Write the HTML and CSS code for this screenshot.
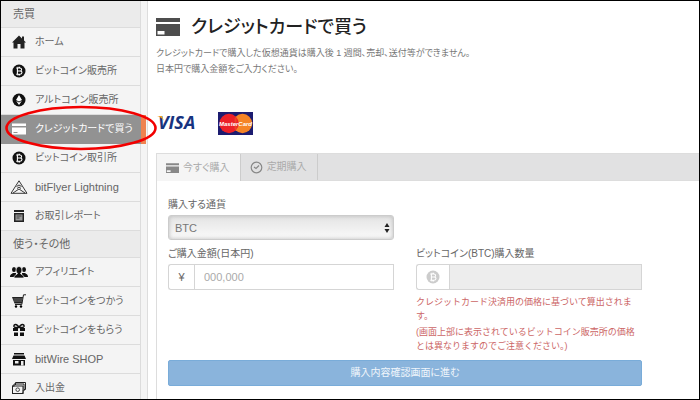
FILE: index.html
```html
<!DOCTYPE html>
<html lang="ja">
<head>
<meta charset="utf-8">
<title>クレジットカードで買う</title>
<link rel="stylesheet" href="styles.css">
</head>
<body>
<svg class="defs" aria-hidden="true">
  <symbol id="coin" viewBox="0 0 14 14"><circle cx="7" cy="7" r="6.5" fill="currentColor"/><path d="M4.2 4h3.6c2.3 0 2.3 2.7.5 3 2.4.2 2.1 3.3-.5 3.3H4.2M5.4 4v6.3M5.4 7h3M6 2.8V4M7.6 2.8V4M6 10.2v1.2M7.6 10.2v1.2" fill="none" stroke="#fff" stroke-width="1.1"/></symbol>
  <symbol id="card" viewBox="0 0 24 18"><path fill="currentColor" fill-rule="evenodd" d="M0 0h24v4H0zM0 6h24v12H0zM1.500 13v3.500h7V13z"/></symbol>
</svg>
<div class="app">
  <nav class="sidebar">
    <h2 class="section">売買</h2>
    <a class="item" href="#"><svg class="icon" viewBox="0 0 14 14"><path d="M7 .5 10 3.500V1.500h2v4l2 2H12.500V13.500H8.500V9h-3v4.500h-4v-6H0z" fill="#222"/></svg>ホーム</a>
    <a class="item" href="#"><svg class="icon"><use href="#coin"/></svg>ビットコイン販売所</a>
    <a class="item" href="#"><svg class="icon" viewBox="0 0 14 14"><circle cx="7" cy="7" r="6.500" fill="#111"/><path d="M7 2 10 7 7 8.500 4 7zM4.200 8 7 9.400 9.800 8 7 12z" fill="#fff"/></svg>アルトコイン販売所</a>
    <a class="item active" href="#"><svg class="icon" viewBox="0 0 14 14"><path fill="#fff" fill-rule="evenodd" d="M0 1.500h14V4H0zM0 5.500h14v7H0zM1.500 10v1h4v-1z"/></svg>クレジットカードで買う
      <svg class="ring" viewBox="0 0 152 46" aria-hidden="true"><ellipse cx="76" cy="23" rx="74.500" ry="21" fill="none" stroke="#f20000" stroke-width="2.600"/></svg></a>
    <a class="item" href="#"><svg class="icon"><use href="#coin"/></svg>ビットコイン取引所</a>
    <a class="item latin" href="#"><svg class="icon wide" viewBox="0 0 18 14"><path d="M9 .8 17 13.300H1zM6.500 6.500 9 5l2.500 1.500M9 9l-6 4M9 9l6 4M7 8.500 9 7l2 1.500" fill="none" stroke="#222" stroke-width=".9"/></svg>bitFlyer Lightning</a>
    <a class="item" href="#"><svg class="icon" viewBox="0 0 14 14"><path d="M2 1h10v2H2zM2 4h10v9H2z" fill="#222"/><path d="M3.500 5.500h7v6h-7z" fill="#999"/><path d="M4.500 7h5M4.500 9h3" stroke="#444"/></svg>お取引レポート</a>
    <h2 class="section">使う・その他</h2>
    <a class="item" href="#"><svg class="icon wide" viewBox="0 0 18 14"><g fill="#111"><ellipse cx="4" cy="4.500" rx="2" ry="2.500"/><ellipse cx="14" cy="4.500" rx="2" ry="2.500"/><path d="M0 12c0-3 2-3 3-4h3v4zM18 12c0-3-2-3-3-4h-3v4z"/><path d="M4 13c0-3.500 3-3 3.500-4.500C5 6 6 1.500 9 1.500S13 6 10.500 8.500C11 10 14 9.500 14 13z" stroke="#f4f4f4" stroke-width=".7"/></g></svg>アフィリエイト</a>
    <a class="item" href="#"><svg class="icon" viewBox="0 0 14 14"><path d="M0 3h11l-1 6.500H2.500z" fill="#222"/><path d="M14 .8h-2.500L9.800 10.500H3M2 5h8M2.500 7h7" fill="none" stroke="#222"/><path d="M1.500 5h9M2 7h8" stroke="#bbb" stroke-width=".5"/><circle cx="4" cy="12.500" r="1.200"/><circle cx="9" cy="12.500" r="1.200"/></svg>ビットコインをつかう</a>
    <a class="item" href="#"><svg class="icon" viewBox="0 0 14 14"><path d="M1 5h5v3H1zM8 5h5v3H8zM2 9.500h4V13H2zM8 9.500h4V13H8z" fill="#111"/><path d="M7 4.500C5 0 1.500 1 2 3.500c.5 1.500 3 1 5 1 2 0 4.500.5 5-1C12.500 1 9 0 7 4.500" fill="none" stroke="#111" stroke-width="1.500"/></svg>ビットコインをもらう</a>
    <a class="item latin" href="#"><svg class="icon" viewBox="0 0 14 14"><path d="M2 1h10v1.500H2zM1.500 3.500h11L14 7H0zM1 8h12v5.500H1z" fill="#111"/><path d="M3 9h3.500v2.500H3zM9 9h2.500v4.500H9z" fill="#eee"/></svg>bitWire SHOP</a>
    <a class="item" href="#"><svg class="icon" viewBox="0 0 14 14"><path d="M3.500 4V1.500h10v7H12M2 5.500V3h10v7h-1.500M.5 5h10.500v7.500H.5z" fill="none" stroke="#222"/><circle cx="5.700" cy="8.700" r="1.800" fill="none" stroke="#222" stroke-width=".8"/><path d="M0 4.500h2.500L0 7zM11.500 13H9l2.500-2.500zM0 13v-2l2 2z" fill="#222"/></svg>入出金</a>
  </nav>
  <main class="main">
    <h1 class="title"><svg class="title-icon"><use href="#card"/></svg>クレジットカードで買う</h1>
    <p class="lead">クレジットカードで購入した仮想通貨は購入後 1 週間、売却、送付等ができません。<br>日本円で購入金額をご入力ください。</p>
    <div class="brands">
      <svg class="visa" viewBox="0 0 43 28" role="img" aria-label="VISA"><text x="2" y="20" font-size="18" class="visa-text">VISA</text><path d="M1 7h5l2 5C6.500 9.500 4.500 8 1 7z" fill="#f0a020"/></svg>
      <svg class="mastercard" viewBox="0 0 35 23" role="img" aria-label="MasterCard"><path d="M0 0h35v23H0z" fill="#1c1c70"/><circle cx="24.500" cy="11.500" r="9.700" fill="#f58426"/><circle cx="11" cy="11.500" r="9.700" fill="#ec2028"/><path d="M17.700 4.500v14M16 7h3M16 9h3M16 14h3M16 16h3" stroke="#f0562a" stroke-width=".6"/><text x="17.500" y="14" text-anchor="middle" font-size="6" class="mc-text">MasterCard</text></svg>
    </div>
    <section class="panel">
      <div class="tabs">
        <button class="tab current" type="button"><svg class="tab-icon"><use href="#card"/></svg>今すぐ購入</button>
        <button class="tab" type="button"><svg class="tab-icon" viewBox="0 0 13 13"><circle cx="6.500" cy="6.500" r="5.300" fill="none" stroke="#888" stroke-width="1.200"/><path d="M4 6l2 1.500L9 4.500" fill="none" stroke="#888" stroke-width="1.200"/></svg>定期購入</button>
      </div>
      <form class="form">
        <div class="field currency">
          <label for="currency">購入する通貨</label>
          <div class="select-wrap">
            <select id="currency"><option>BTC</option></select>
            <svg class="arrows" viewBox="0 0 6 10" aria-hidden="true"><path d="M3 0 5.500 4H.5zM3 10 .5 6h5z" fill="#222"/></svg>
          </div>
        </div>
        <div class="field">
          <label for="amount">ご購入金額(日本円)</label>
          <div class="group"><span class="addon">¥</span><input id="amount" type="text" placeholder="000,000"></div>
        </div>
        <div class="field">
          <label for="quantity">ビットコイン(BTC)購入数量</label>
          <div class="group"><span class="addon coin"><svg class="icon"><use href="#coin"/></svg></span><input id="quantity" type="text" disabled></div>
          <div class="note"><p>クレジットカード決済用の価格に基づいて算出されま<br>す。</p><p>(画面上部に表示されているビットコイン販売所の価格<br>とは異なりますのでご注意ください。)</p></div>
        </div>
        <button class="submit" type="button">購入内容確認画面に進む</button>
      </form>
    </section>
  </main>
</div>
</body>
</html>
```
FILE: styles.css
```css
* { box-sizing: border-box; }
body {
  margin: 0;
  color: #666;
  background: #fff;
  font: 10px/16px "Liberation Sans", "Noto Sans CJK JP", sans-serif;
  font-feature-settings: "palt";
}
h1, h2, p { margin: 0; font-weight: 400; }
button, input, select { font: inherit; font-feature-settings: inherit; color: inherit; }
svg { flex: none; }
.defs { position: absolute; width: 0; height: 0; }
.app {
  display: flex;
  height: 100vh;
  overflow: hidden;
  border: 1px solid #000;
}
.sidebar {
  flex: none;
  width: 147px;
  padding-right: 6px;
  background: #f4f4f4;
  border-right: 1px solid #ddd;
}
.section, .item {
  display: flex;
  align-items: center;
  border: solid #dcdcdc;
  border-width: 0 1px 1px 0;
}
.section {
  height: 27px;
  padding-left: 12px;
  background: #ebebeb;
  font-size: 11px;
}
.item {
  position: relative;
  height: 29px;
  padding-left: 11px;
  gap: 9px;
  color: #666;
  text-decoration: none;
  white-space: nowrap;
}
.latin { font-size: 11px; }
.icon { width: 14px; height: 14px; color: #111; }
.wide { width: 18px; margin: 0 -2px; }
.active {
  color: #fff;
  background: #929292;
  border-color: #929292;
  box-shadow: 5px 0 #ef8250;
}
.ring { position: absolute; left: 4px; top: -10px; width: 152px; height: 46px; z-index: 1; }
.main { flex: 1; min-width: 0; padding: 10px 0 0 8px; }
.title {
  display: flex;
  align-items: center;
  gap: 11px;
  height: 32px;
  color: #222;
  font-size: 18px;
  font-weight: 500;
}
.title-icon { width: 24px; height: 18px; color: #4d4d4d; }
.lead { margin-top: 2px; font-size: 9px; color: #777; }
.brands { display: flex; align-items: center; gap: 19px; margin-top: 32px; }
.visa { width: 43px; height: 28px; overflow: visible; }
.mastercard { width: 35px; height: 23px; }
.visa-text { font-family: "Open Sans", sans-serif; font-weight: 700; font-style: italic; fill: #17337f; }
.mc-text { font-family: "Liberation Sans", sans-serif; font-weight: 700; font-style: italic; fill: #fff; }
.panel { margin-top: 16px; border: solid #ddd; border-width: 1px 0 0 1px; }
.tabs { display: flex; height: 27px; background: #e1e1e2; border-bottom: 1px solid #ddd; }
.tab {
  display: flex;
  align-items: center;
  gap: 4px;
  padding: 0 10px 0 9px;
  border: 0;
  border-right: 1px solid #ccc;
  background: none;
  color: #aaa;
}
.current { background: #f5f5f5; margin-bottom: -1px; }
.tab-icon { width: 13px; height: 13px; color: #888; }
.current .tab-icon { height: 10px; }
.form {
  display: grid;
  grid-template-columns: 225fr 225fr;
  column-gap: 22px;
  padding: 16px 57px 20px 11px;
}
.currency { grid-column: 1 / -1; width: calc(50% - 11px); }
.field label { display: block; height: 18px; line-height: 16px; }
.select-wrap { position: relative; margin-bottom: 6px; }
select {
  appearance: none;
  display: block;
  width: 100%;
  height: 25px;
  padding: 0 6px;
  border: 1px solid #ccc;
  border-radius: 3px;
  background: linear-gradient(#e4e4e4, #fafafa);
  box-shadow: inset 0 0 4px #bbb;
  color: #777;
  font-size: 11px;
  opacity: 1;
}
.arrows { position: absolute; right: 4px; top: 8px; width: 6px; height: 10px; }
.group { display: flex; height: 26px; }
.addon {
  display: flex;
  align-items: center;
  justify-content: center;
  width: 26px;
  border: 1px solid #d5d5d5;
  border-right: 0;
  border-radius: 3px 0 0 3px;
  font-size: 11px;
}
.coin { width: 33px; }
.coin .icon { color: #ccc; }
.group input {
  flex: 1;
  min-width: 0;
  padding: 0 9px;
  border: 1px solid #d5d5d5;
  border-radius: 0;
  background: #fff;
  font-size: 11px;
}
.group input:disabled { background: #ededed; }
input::placeholder { color: #aaa; opacity: 1; }
.note {
  margin-top: 5px;
  color: #c66;
  font-size: 9px;
  line-height: 14px;
  font-feature-settings: normal;
}
.note p + p { margin-top: 2px; }
.submit {
  grid-column: 1 / -1;
  height: 26px;
  margin-top: 7px;
  border: 1px solid #79acd9;
  border-radius: 2px;
  background: #8ab4dc;
  color: #f0f6fb;
  font-size: 10px;
}
```
